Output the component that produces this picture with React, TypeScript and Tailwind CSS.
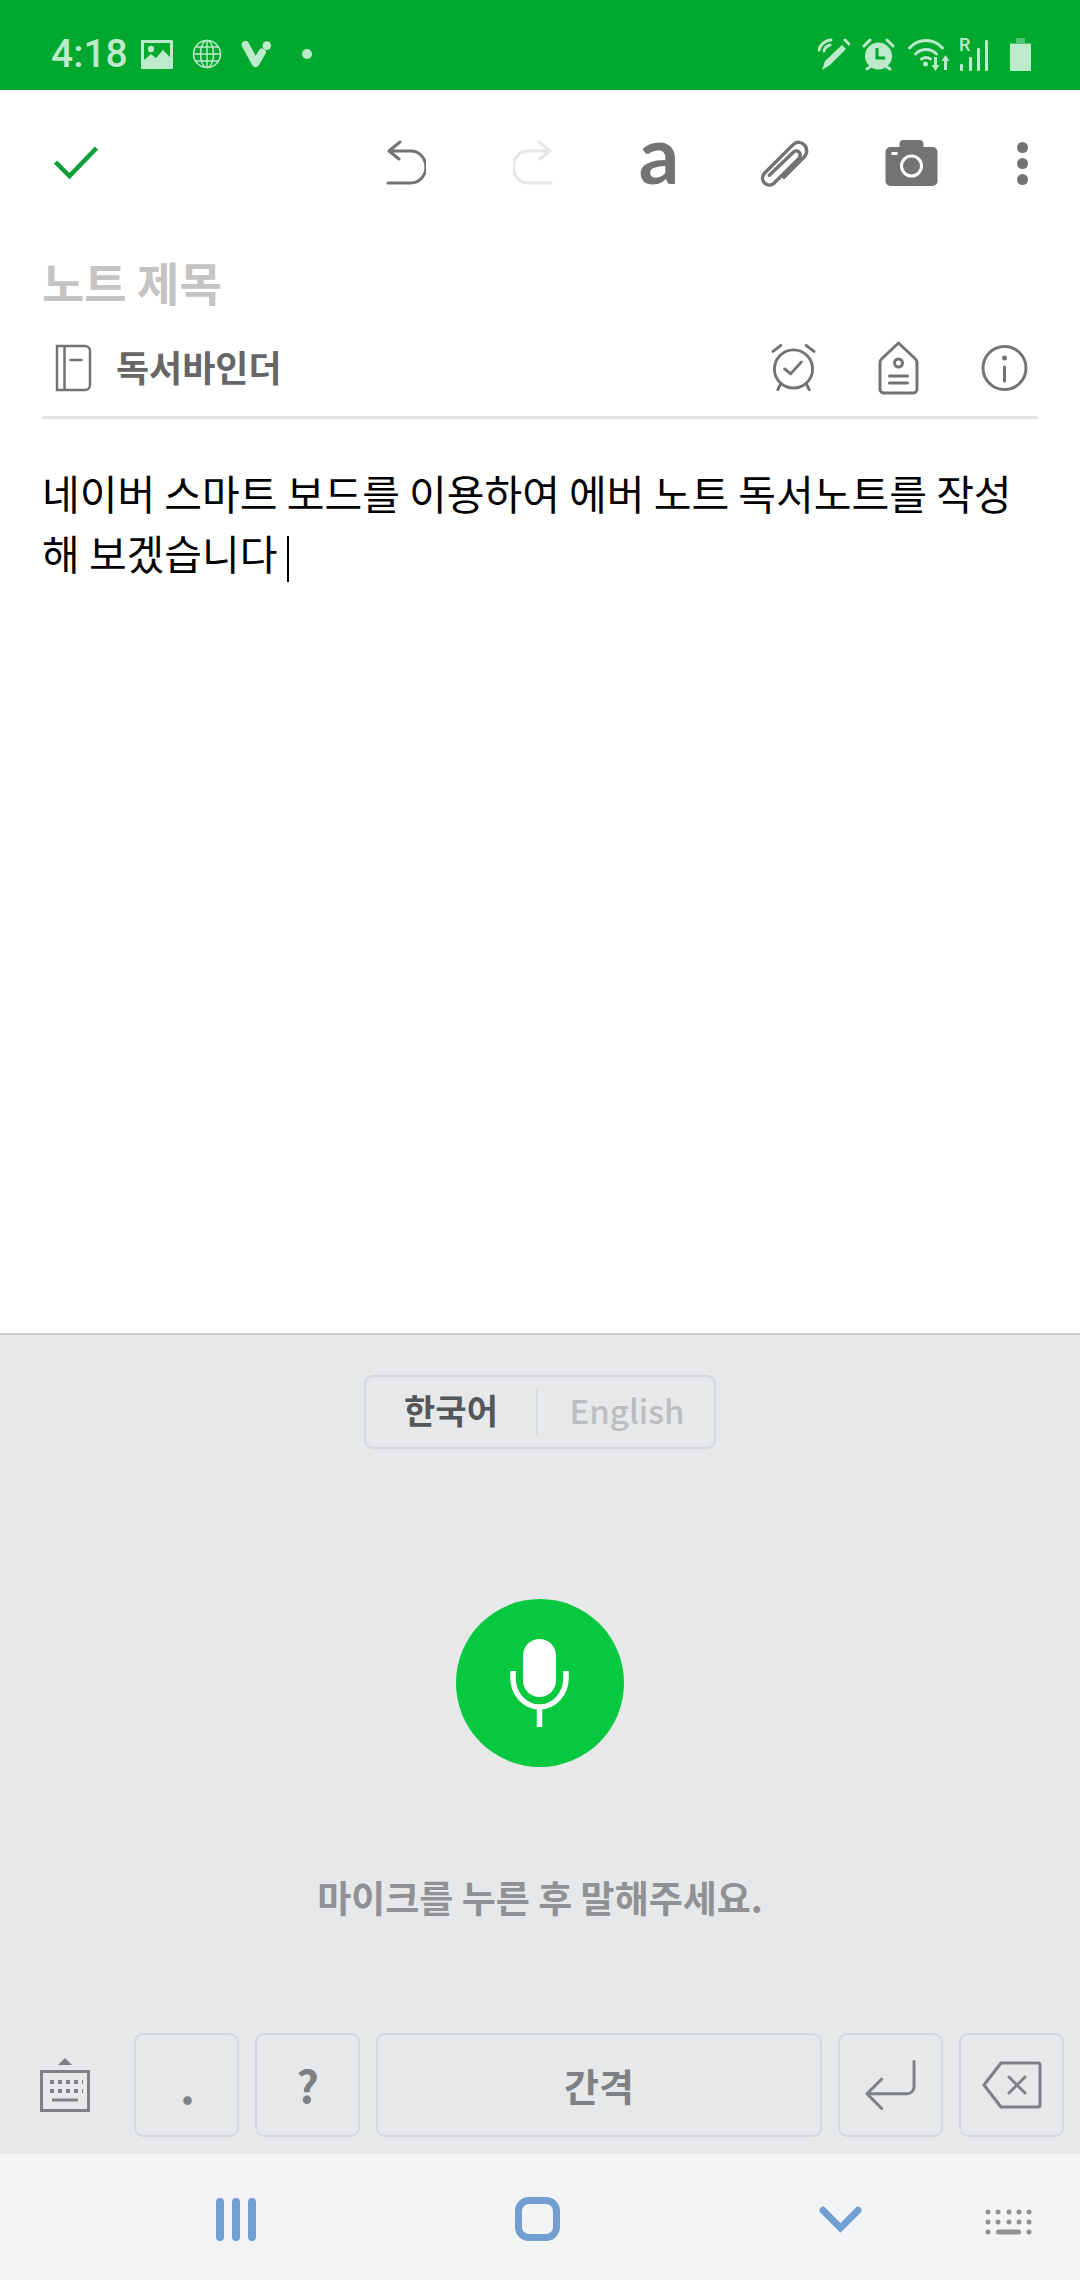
const GRAY = "#737373";
const PALE = "#bdeacb";

function StatusLeft() {
  return (
    <div className="flex items-center">
      <span className="w-[90px] text-[39px] leading-[44px] font-medium text-[#bdeacb] [font-family:Roboto,sans-serif]">4:18</span>
      <svg width="32" height="29" viewBox="0 0 32 29">
        <path fill={PALE} fillRule="evenodd" d="M1 0h30a1 1 0 0 1 1 1v27a1 1 0 0 1-1 1H1a1 1 0 0 1-1-1V1a1 1 0 0 1 1-1zM3 3v17l7-6 5 4 7-8 7 7V3z" />
        <circle cx="10" cy="9" r="3.200" fill={PALE} />
      </svg>
      <svg width="30" height="30" viewBox="0 0 30 30" className="ml-[19px]" fill="none" stroke={PALE} strokeWidth="1.500">
        <circle cx="15" cy="15" r="13.500" />
        <ellipse cx="15" cy="15" rx="6.500" ry="13.500" />
        <path d="M15 1.500v27M1.500 15h27M3.500 8h23M3.500 22h23" />
      </svg>
      <svg width="32" height="28" viewBox="0 0 33 30" className="ml-[19px]">
        <path fill="none" stroke={PALE} strokeWidth="8" strokeLinecap="round" strokeLinejoin="round" d="M4 5l11 20 7-12" />
        <circle cx="27" cy="6" r="4.600" fill={PALE} />
      </svg>
      <span className="ml-[29px] w-[10px] h-[10px] rounded-full bg-[#bdeacb]" />
    </div>
  );
}

function StatusRight() {
  return (
    <div className="flex items-center">
      <svg width="32" height="33" viewBox="0 0 32 33" fill="none">
        <path fill={PALE} d="M24 7l4 4-16 16-8 5 3-9z" />
        <path stroke={PALE} strokeWidth="3" strokeLinecap="round" d="M27 2l4 4M1 12a13 13 0 0 1 12-10M6 13a8 8 0 0 1 6-6" />
      </svg>
      <svg width="33" height="33" viewBox="0 0 33 33" className="ml-[12px]" fill="none">
        <circle cx="16.500" cy="18" r="13.500" fill={PALE} />
        <path stroke={PALE} strokeWidth="3" strokeLinecap="round" d="M2 8l6-6M31 8l-6-6M5 31l3-2M28 31l-3-2" />
        <path stroke="#00a82d" strokeWidth="3" d="M15 10v10h8" />
      </svg>
      <svg width="43" height="33" viewBox="0 0 42 33" className="ml-[12px]" fill="none">
        <path stroke={PALE} strokeWidth="3" strokeLinecap="round" d="M2 10c9-10 24-10 33 0M8 16c6-6 15-6 21 0M14 21c3-2 6-2 9 0" />
        <circle cx="18" cy="26" r="2.500" fill={PALE} />
        <path stroke={PALE} strokeWidth="3" d="M28 19v11M38 32V22" />
        <path fill={PALE} d="M24 27h8l-4 6zM34 23l4-6 4 6z" />
      </svg>
      <div className="relative ml-[9px] w-[29px] h-[33px]">
        <span className="absolute left-0 top-[-2px] text-[18px] leading-[18px] font-medium text-[#bdeacb] [font-family:Roboto,sans-serif]">R</span>
        <svg width="29" height="33" viewBox="0 0 29 33" fill={PALE}>
          <rect x="1" y="26" width="3" height="7" rx="1" />
          <rect x="10" y="19" width="3" height="14" rx="1" />
          <rect x="18" y="10" width="3" height="23" rx="1" />
          <rect x="26" y="2" width="3" height="31" rx="1" />
        </svg>
      </div>
      <svg width="21" height="33" viewBox="0 0 21 33" className="ml-[22px]">
        <path fill="#4fc56f" d="M6 0h9v5h5a1 1 0 0 1 1 1v3H0V6a1 1 0 0 1 1-1h5z" />
        <path fill={PALE} d="M0 6h21v26a1 1 0 0 1-1 1H1a1 1 0 0 1-1-1z" />
      </svg>
    </div>
  );
}

function Undo({ color, flip }: { color: string; flip?: boolean }) {
  return (
    <svg width="40" height="46" viewBox="0 0 40 46" fill="none" className={flip ? "-scale-x-100" : ""}>
      <path stroke={color} strokeWidth="3" strokeLinecap="round" strokeLinejoin="round" d="M14 2L3 11l10 8M4 11h21a13 14 0 0 1 0 32H2" />
    </svg>
  );
}

function Toolbar() {
  return (
    <div className="h-[146px] flex items-center">
      <svg width="44" height="36" viewBox="0 0 44 36" className="ml-[54px]" fill="none">
        <path stroke="#0f9f3a" strokeWidth="4.500" d="M1.500 17l14 14L42.500 3" />
      </svg>
      <div className="ml-[288px]"><Undo color={GRAY} /></div>
      <div className="ml-[87px]"><Undo color="#e6e6e6" flip /></div>
      <span className="ml-[88px] mb-[20px] w-[36px] flex justify-center text-[80px] leading-[46px] font-bold text-[#737373] [font-family:Lato,sans-serif]">a</span>
      <svg width="53" height="47" viewBox="3 2 49 48" className="ml-[81px]" fill="none">
        <path stroke={GRAY} strokeWidth="3.500" strokeLinecap="round" strokeLinejoin="round" d="M27 40L47 20c9-9-3-21-11-13L7 36c-6 7 3 16 10 10L42 21c4-5-1-10-5-7L12 38" />
      </svg>
      <svg width="53" height="46" viewBox="0 0 52 46" className="ml-[74px]">
        <path fill={GRAY} fillRule="evenodd" d="M18 0h16a4 4 0 0 1 4 4v3h9a5 5 0 0 1 5 5v29a5 5 0 0 1-5 5H5a5 5 0 0 1-5-5V12a5 5 0 0 1 5-5h9V4a4 4 0 0 1 4-4z" />
        <circle cx="26" cy="26" r="10" fill="none" stroke="#fff" strokeWidth="3" />
        <rect x="6" y="12" width="6" height="3" fill="#fff" />
      </svg>
      <div className="ml-[79px] flex flex-col gap-[5px]">
        <span className="w-[11px] h-[11px] rounded-full bg-[#737373]" />
        <span className="w-[11px] h-[11px] rounded-full bg-[#737373]" />
        <span className="w-[11px] h-[11px] rounded-full bg-[#737373]" />
      </div>
    </div>
  );
}

function NoteMeta() {
  return (
    <div className="mx-[42px] h-[99px] border-b-[3px] border-[#e4e4e4] flex items-center">
      <svg width="37" height="48" viewBox="0 0 36 48" className="ml-[13px]" fill="none" stroke={GRAY} strokeWidth="2.500">
        <path d="M1.500 2h28a5 5 0 0 1 5 5v34a5 5 0 0 1-5 5H1.500zM9 2v44M14 16h13" />
      </svg>
      <span className="ml-[24px] mb-[5px] text-[36px] leading-[44px] font-bold text-[#666666]">독서바인더</span>
      <div className="flex-1" />
      <svg width="45" height="48" viewBox="0 0 46 48" fill="none" stroke={GRAY} strokeWidth="3" strokeLinecap="round" strokeLinejoin="round">
        <circle cx="23" cy="25" r="19.500" />
        <path d="M2 7l8-6M44 7l-8-6M7 46l3-6M39 46l-3-6M14 25l6 5 11-12" />
      </svg>
      <svg width="41" height="54" viewBox="0 0 40 54" className="ml-[62px]" fill="none" stroke={GRAY} strokeWidth="3" strokeLinecap="round" strokeLinejoin="round">
        <path d="M20 2L3 18c-1 1-1.500 2-1.500 4v26a4 4 0 0 0 4 4h29a4 4 0 0 0 4-4V22c0-2-.5-3-1.500-4z" />
        <circle cx="20" cy="22" r="4" />
        <path d="M11 35h18M11 42h18" />
      </svg>
      <svg width="47" height="48" viewBox="0 0 47 48" className="ml-[62px] mr-[10px]" fill="none" stroke={GRAY} strokeWidth="3" strokeLinecap="round">
        <circle cx="23.500" cy="24" r="21.500" />
        <path d="M23.500 23v14" />
        <circle cx="23.500" cy="14" r="2.500" fill={GRAY} stroke="none" />
      </svg>
    </div>
  );
}

function Key({ w, children }: { w: string; children: React.ReactNode }) {
  return (
    <div className={`${w} h-[104px] rounded-[9px] border-[2px] border-[#d5d9de] flex items-center justify-center`}>
      {children}
    </div>
  );
}

export default function App() {
  return (
    <div className="w-[1080px] h-[2280px] flex flex-col bg-white [font-family:'Noto_Sans_CJK_KR','Noto_Sans',sans-serif]">
      <div className="h-[90px] bg-[#00a82d] flex items-center justify-between pl-[51px] pr-[49px] pt-[18px]">
        <StatusLeft />
        <StatusRight />
      </div>
      <Toolbar />
      <div className="pl-[42px] h-[84px] pt-[6px] flex items-center">
        <span className="text-[46px] leading-[60px] font-bold text-[#c4c4c4]">노트 제목</span>
      </div>
      <NoteMeta />
      <div className="flex-1 pl-[42px] pr-[30px] pt-[43px] text-[41px] leading-[60px] text-black">
        네이버 스마트 보드를 이용하여 에버 노트 독서노트를 작성
        <br />
        해 보겠습니다
        <span className="inline-block align-middle ml-[9px] w-[2px] h-[46px] bg-black" />
      </div>

      <div className="h-[821px] bg-[#e6e8ea] border-t-[2px] border-[#cbcccf] flex flex-col items-center">
        <div className="mt-[40px] w-[352px] h-[74px] rounded-[9px] border-[2px] border-[#d5d9de] flex items-center pb-[4px]">
          <span className="w-[170px] text-center text-[34px] leading-[44px] font-bold text-[#54575a]">한국어</span>
          <span className="w-[2px] h-[46px] mt-[4px] bg-[#d9dcdf]" />
          <span className="flex-1 text-center text-[33px] leading-[44px] font-medium text-[#bcbdc0] pl-[2px]">English</span>
        </div>
        <div className="mt-[150px] w-[168px] h-[168px] rounded-full bg-[#07c93f] flex items-center justify-center">
          <svg width="60" height="88" viewBox="0 0 60 88" fill="none">
            <rect x="13" y="0" width="33" height="58" rx="16.500" fill="#fff" />
            <path stroke="#fff" strokeWidth="5.500" d="M3 32v7a26.500 29 0 0 0 53 0v-7M29.500 68v20" />
          </svg>
        </div>
        <div className="mt-[105px] text-[37px] leading-[50px] font-bold text-[#8f9194]">마이크를 누른 후 말해주세요.</div>
        <div className="flex-1" />
        <div className="w-full h-[104px] flex items-center mb-[17px]">
          <svg width="50" height="54" viewBox="0 0 50 54" className="ml-[40px] mr-[44px]" fill="none">
            <path fill="#7e8083" d="M18 7L25 0l7 7z" />
            <rect x="1.500" y="13.500" width="47" height="39" stroke="#7e8083" strokeWidth="3" />
            <path stroke="#7e8083" strokeWidth="4" strokeDasharray="4 4" d="M10 24h33M10 33h33" />
            <path stroke="#7e8083" strokeWidth="3" d="M12 42h26" />
          </svg>
          <div className="flex gap-[16px]">
            <Key w="w-[105px]"><span className="text-[46px] leading-[44px] font-bold text-[#7e8083] mb-[3px] ml-[2px]">.</span></Key>
            <Key w="w-[105px]"><span className="text-[44px] leading-[44px] font-bold text-[#7e8083] mb-[3px]">?</span></Key>
            <Key w="w-[446px]"><span className="text-[38px] leading-[44px] font-bold text-[#7e8083]">간격</span></Key>
            <Key w="w-[105px]">
              <svg width="51" height="50" viewBox="0 0 52 50" fill="none" stroke="#7e8083" strokeWidth="3" strokeLinecap="round" strokeLinejoin="round">
                <path d="M17 19L2 34l15 15M2 34h41a7 7 0 0 0 7-7V1" />
              </svg>
            </Key>
            <Key w="w-[105px]">
              <svg width="60" height="48" viewBox="0 0 60 48" fill="none" stroke="#7e8083" strokeWidth="3" strokeLinecap="round" strokeLinejoin="round">
                <path d="M19 2h37a2 2 0 0 1 2 2v40a2 2 0 0 1-2 2H19L2 24zM27 16l16 16M43 16L27 32" />
              </svg>
            </Key>
          </div>
        </div>
      </div>

      <div className="h-[126px] bg-[#f3f4f5] flex items-center">
        <div className="ml-[216px] flex gap-[8px] mt-[4px]">
          <span className="w-[8px] h-[43px] rounded-full bg-[#739ed1]" />
          <span className="w-[8px] h-[43px] rounded-full bg-[#739ed1]" />
          <span className="w-[8px] h-[43px] rounded-full bg-[#739ed1]" />
        </div>
        <div className="ml-[259px] mt-[4px] w-[45px] h-[44px] rounded-[14px] border-[7px] border-[#739ed1]" />
        <svg width="43" height="28" viewBox="0 0 44 28" className="ml-[259px] mt-[6px]" fill="none">
          <path stroke="#739ed1" strokeWidth="7" strokeLinecap="round" d="M4 4l18 18L40 4" />
        </svg>
        <svg width="48" height="26" viewBox="0 0 48 26" className="ml-[123px] mt-[10px]" fill="#8f9193">
          <circle cx="3" cy="3" r="2.500" /><circle cx="13" cy="3" r="2.500" /><circle cx="24" cy="3" r="2.500" /><circle cx="34" cy="3" r="2.500" /><circle cx="44" cy="3" r="2.500" />
          <circle cx="3" cy="13" r="2.500" /><circle cx="13" cy="13" r="2.500" /><circle cx="24" cy="13" r="2.500" /><circle cx="34" cy="13" r="2.500" /><circle cx="44" cy="13" r="2.500" />
          <circle cx="3" cy="23" r="2.500" /><rect x="11" y="20.500" width="25" height="5" rx="2.500" /><circle cx="44" cy="23" r="2.500" />
        </svg>
      </div>
    </div>
  );
}
